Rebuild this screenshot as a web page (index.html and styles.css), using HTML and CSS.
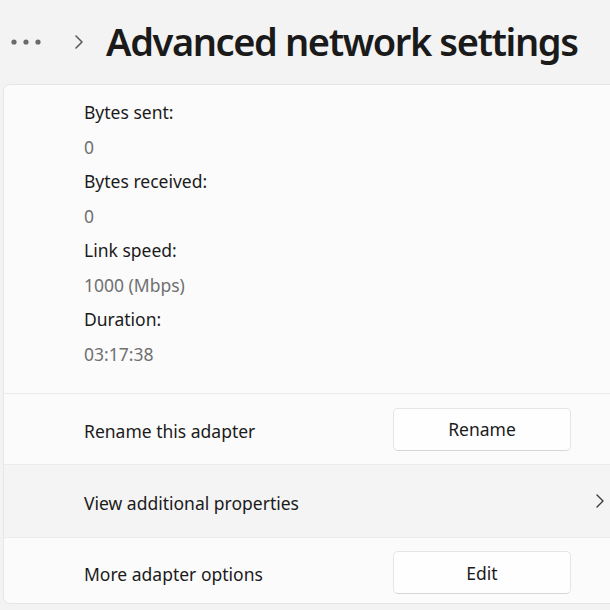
FILE: index.html
```html
<!DOCTYPE html>
<html>
<head>
<meta charset="utf-8">
<link rel="stylesheet" href="styles.css">
</head>
<body>
<div class="page">
  <header class="header">
    <svg class="dots" width="32" height="8" viewBox="0 0 32 8"><circle cx="4" cy="4" r="2.6"/><circle cx="16" cy="4" r="2.6"/><circle cx="28" cy="4" r="2.6"/></svg>
    <svg class="crumb" width="10" height="16" viewBox="0 0 10 16"><path d="M2 2 L8 8 L2 14" fill="none" stroke="#5c5c5c" stroke-width="1.6" stroke-linecap="round" stroke-linejoin="round"/></svg>
    <h1 class="title">Advanced network settings</h1>
  </header>
  <section class="card">
    <div class="stats">
      <div class="label">Bytes sent:</div>
      <div class="value">0</div>
      <div class="label">Bytes received:</div>
      <div class="value">0</div>
      <div class="label">Link speed:</div>
      <div class="value">1000 (Mbps)</div>
      <div class="label">Duration:</div>
      <div class="value">03:17:38</div>
    </div>
    <div class="row">
      <span class="row-text">Rename this adapter</span>
      <button class="btn">Rename</button>
    </div>
    <div class="row row-link">
      <span class="row-text">View additional properties</span>
      <svg class="chev" width="10" height="16" viewBox="0 0 10 16"><path d="M2 2 L8 8 L2 14" fill="none" stroke="#3a3a3a" stroke-width="1.4" stroke-linecap="round" stroke-linejoin="round"/></svg>
    </div>
    <div class="row row-last">
      <span class="row-text">More adapter options</span>
      <button class="btn">Edit</button>
    </div>
  </section>
</div>
</body>
</html>
```
FILE: styles.css
```css
html, body {
  margin: 0;
  padding: 0;
}
body {
  width: 610px;
  height: 610px;
  overflow: hidden;
  background: #f3f3f3;
  font-family: "Noto Sans", "Open Sans", sans-serif;
  color: #1b1b1b;
}
.page {
  width: 620px;
  padding-left: 3px;
}
.header {
  height: 84px;
  display: flex;
  align-items: center;
}
.dots {
  fill: #6a6a6a;
  margin-left: 7px;
  flex: none;
}
.crumb {
  margin-left: 32px;
  flex: none;
}
.title {
  margin: 0 0 0 22px;
  font-size: 38px;
  font-weight: 600;
  color: #1a1a1a;
  letter-spacing: -1.4px;
  line-height: 1;
  white-space: nowrap;
  padding-bottom: 2px;
}
.card {
  background: #fbfbfb;
  border: 1px solid #e6e6e6;
  border-radius: 7px;
  height: 520px;
  box-sizing: border-box;
  overflow: hidden;
}
.stats {
  padding: 10px 0 22px 80px;
  font-size: 17.5px;
  line-height: 34.5px;
}
.label {
  color: #1b1b1b;
}
.value {
  color: #707070;
}
.row {
  display: flex;
  align-items: center;
  height: 70px;
  border-top: 1px solid #ececec;
  padding: 0 51px 0 80px;
  font-size: 17.5px;
}
.row-link {
  background: #f4f4f4;
  height: 72px;
  padding-right: 17px;
}
.row-last {
  height: 69px;
}
.row-text {
  flex: 1;
  padding-top: 3px;
}
.btn {
  width: 178px;
  height: 43px;
  background: #fefefe;
  border: 1px solid #e5e5e5;
  border-bottom-color: #d6d6d6;
  border-radius: 5px;
  font-family: inherit;
  font-size: 17.5px;
  color: #1b1b1b;
  padding: 0;
}
.chev {
  display: block;
}
```
